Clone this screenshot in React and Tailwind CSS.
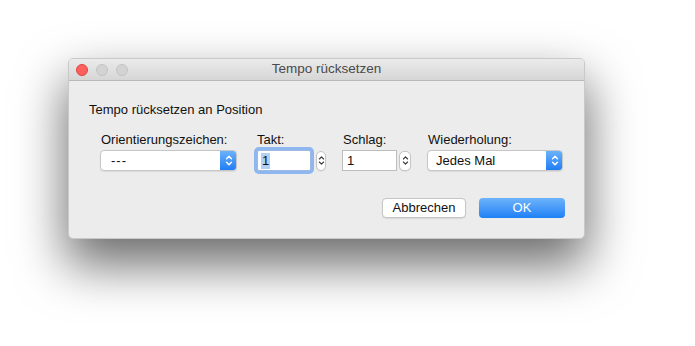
import React from "react";

const Chevrons = ({ color, w = 8, h = 13, sw = 1.4 }) => (
  <svg width={w} height={h} viewBox="0 0 8 13" fill="none" stroke={color} strokeWidth={sw} strokeLinecap="round" strokeLinejoin="round">
    <path d="M1.6 4.8 L4 2.3 L6.4 4.8" />
    <path d="M1.6 8.2 L4 10.7 L6.4 8.2" />
  </svg>
);

const Popup = ({ value, width, padLeft }) => (
  <div
    className={`flex h-[21px] items-stretch overflow-hidden rounded-[4px] border border-[#c6c6c6] bg-white shadow-[0_1px_1px_rgba(0,0,0,0.08)] ${width}`}
  >
    <div className={`flex flex-1 items-center text-[13px] text-[#111] ${padLeft}`}>{value}</div>
    <div className="-my-px -mr-px flex w-[17px] items-center justify-center rounded-r-[4px] bg-gradient-to-b from-[#6cb4fb] to-[#1a7bf3]">
      <Chevrons color="#ffffff" />
    </div>
  </div>
);

const Stepper = ({ width }) => (
  <div className={`flex h-[20px] items-center justify-center rounded-[5px] border border-[#c4c4c4] bg-white shadow-[0_1px_1px_rgba(0,0,0,0.06)] ${width}`}>
    <Chevrons color="#3a3a3a" w={7} h={13} sw={1.3} />
  </div>
);

const App = () => {
  return (
    <div
      className="min-h-screen bg-white pl-[68px] pt-[58px]"
      style={{ fontFamily: '"Liberation Sans", Arial, sans-serif' }}
    >
      <div className="w-[517px] overflow-hidden rounded-[5px] border border-[#c9c9c9] bg-[#ececec] shadow-[0_24px_50px_2px_rgba(0,0,0,0.58)]">
        {/* title bar */}
        <div className="relative flex h-[22px] items-center border-b border-[#b9b9b9] bg-gradient-to-b from-[#ebebeb] to-[#d6d6d6] pl-[7px]">
          <div className="flex gap-2">
            <div className="h-3 w-3 rounded-full border border-[#e0443e] bg-[#fc615d]" />
            <div className="h-3 w-3 rounded-full border border-[#c4c4c4] bg-[#d3d3d3]" />
            <div className="h-3 w-3 rounded-full border border-[#c4c4c4] bg-[#d3d3d3]" />
          </div>
          <div className="absolute inset-0 flex items-center justify-center text-[13.5px] text-[#4a4a4a]">
            Tempo rücksetzen
          </div>
        </div>

        {/* body */}
        <div className="pb-[20px] pl-[20px] pr-[19px] pt-[21px] text-[13px] leading-4 text-[#111]">
          <div>Tempo rücksetzen an Position</div>

          <div className="mt-[14px] flex items-start pl-[11px]">
            <div className="flex flex-col gap-[2px]">
              <div className="pl-px">Orientierungszeichen:</div>
              <Popup value="---" width="w-[137px]" padLeft="pl-[10px] tracking-[1px]" />
            </div>

            <div className="ml-[20px] flex flex-col gap-[2px]">
              <div>Takt:</div>
              <div className="flex items-center">
                <div className="flex h-[21px] w-[54px] items-center rounded-[2px] border border-[#9fb9e0] bg-white pl-[3px] shadow-[0_0_0_3px_#8eb6ef]">
                  <span className="bg-[#b2d0f6] px-px text-[#111]">1</span>
                </div>
                <div className="ml-[5px]">
                  <Stepper width="w-[10px]" />
                </div>
              </div>
            </div>

            <div className="ml-[16px] flex flex-col gap-[2px]">
              <div className="pl-px">Schlag:</div>
              <div className="flex items-center">
                <div className="flex h-[21px] w-[55px] items-center border border-[#bdbdbd] bg-white pl-[4px]">1</div>
                <div className="ml-[2px]">
                  <Stepper width="w-[12px]" />
                </div>
              </div>
            </div>

            <div className="ml-[16px] flex flex-col gap-[2px]">
              <div className="pl-px">Wiederholung:</div>
              <Popup value="Jedes Mal" width="w-[136px]" padLeft="pl-[8px]" />
            </div>
          </div>

          <div className="mt-[27px] flex justify-end gap-[13px]">
            <button className="flex h-[20px] w-[84px] items-center justify-center rounded-[4px] border border-[#c4c4c4] bg-white text-[13px] text-[#111] shadow-[0_1px_1px_rgba(0,0,0,0.08)]">
              Abbrechen
            </button>
            <button className="flex h-[20px] w-[86px] items-center justify-center rounded-[4px] bg-gradient-to-b from-[#6cb3fa] to-[#1b80f6] text-[13px] text-white">
              OK
            </button>
          </div>
        </div>
      </div>
    </div>
  );
};

export default App;
